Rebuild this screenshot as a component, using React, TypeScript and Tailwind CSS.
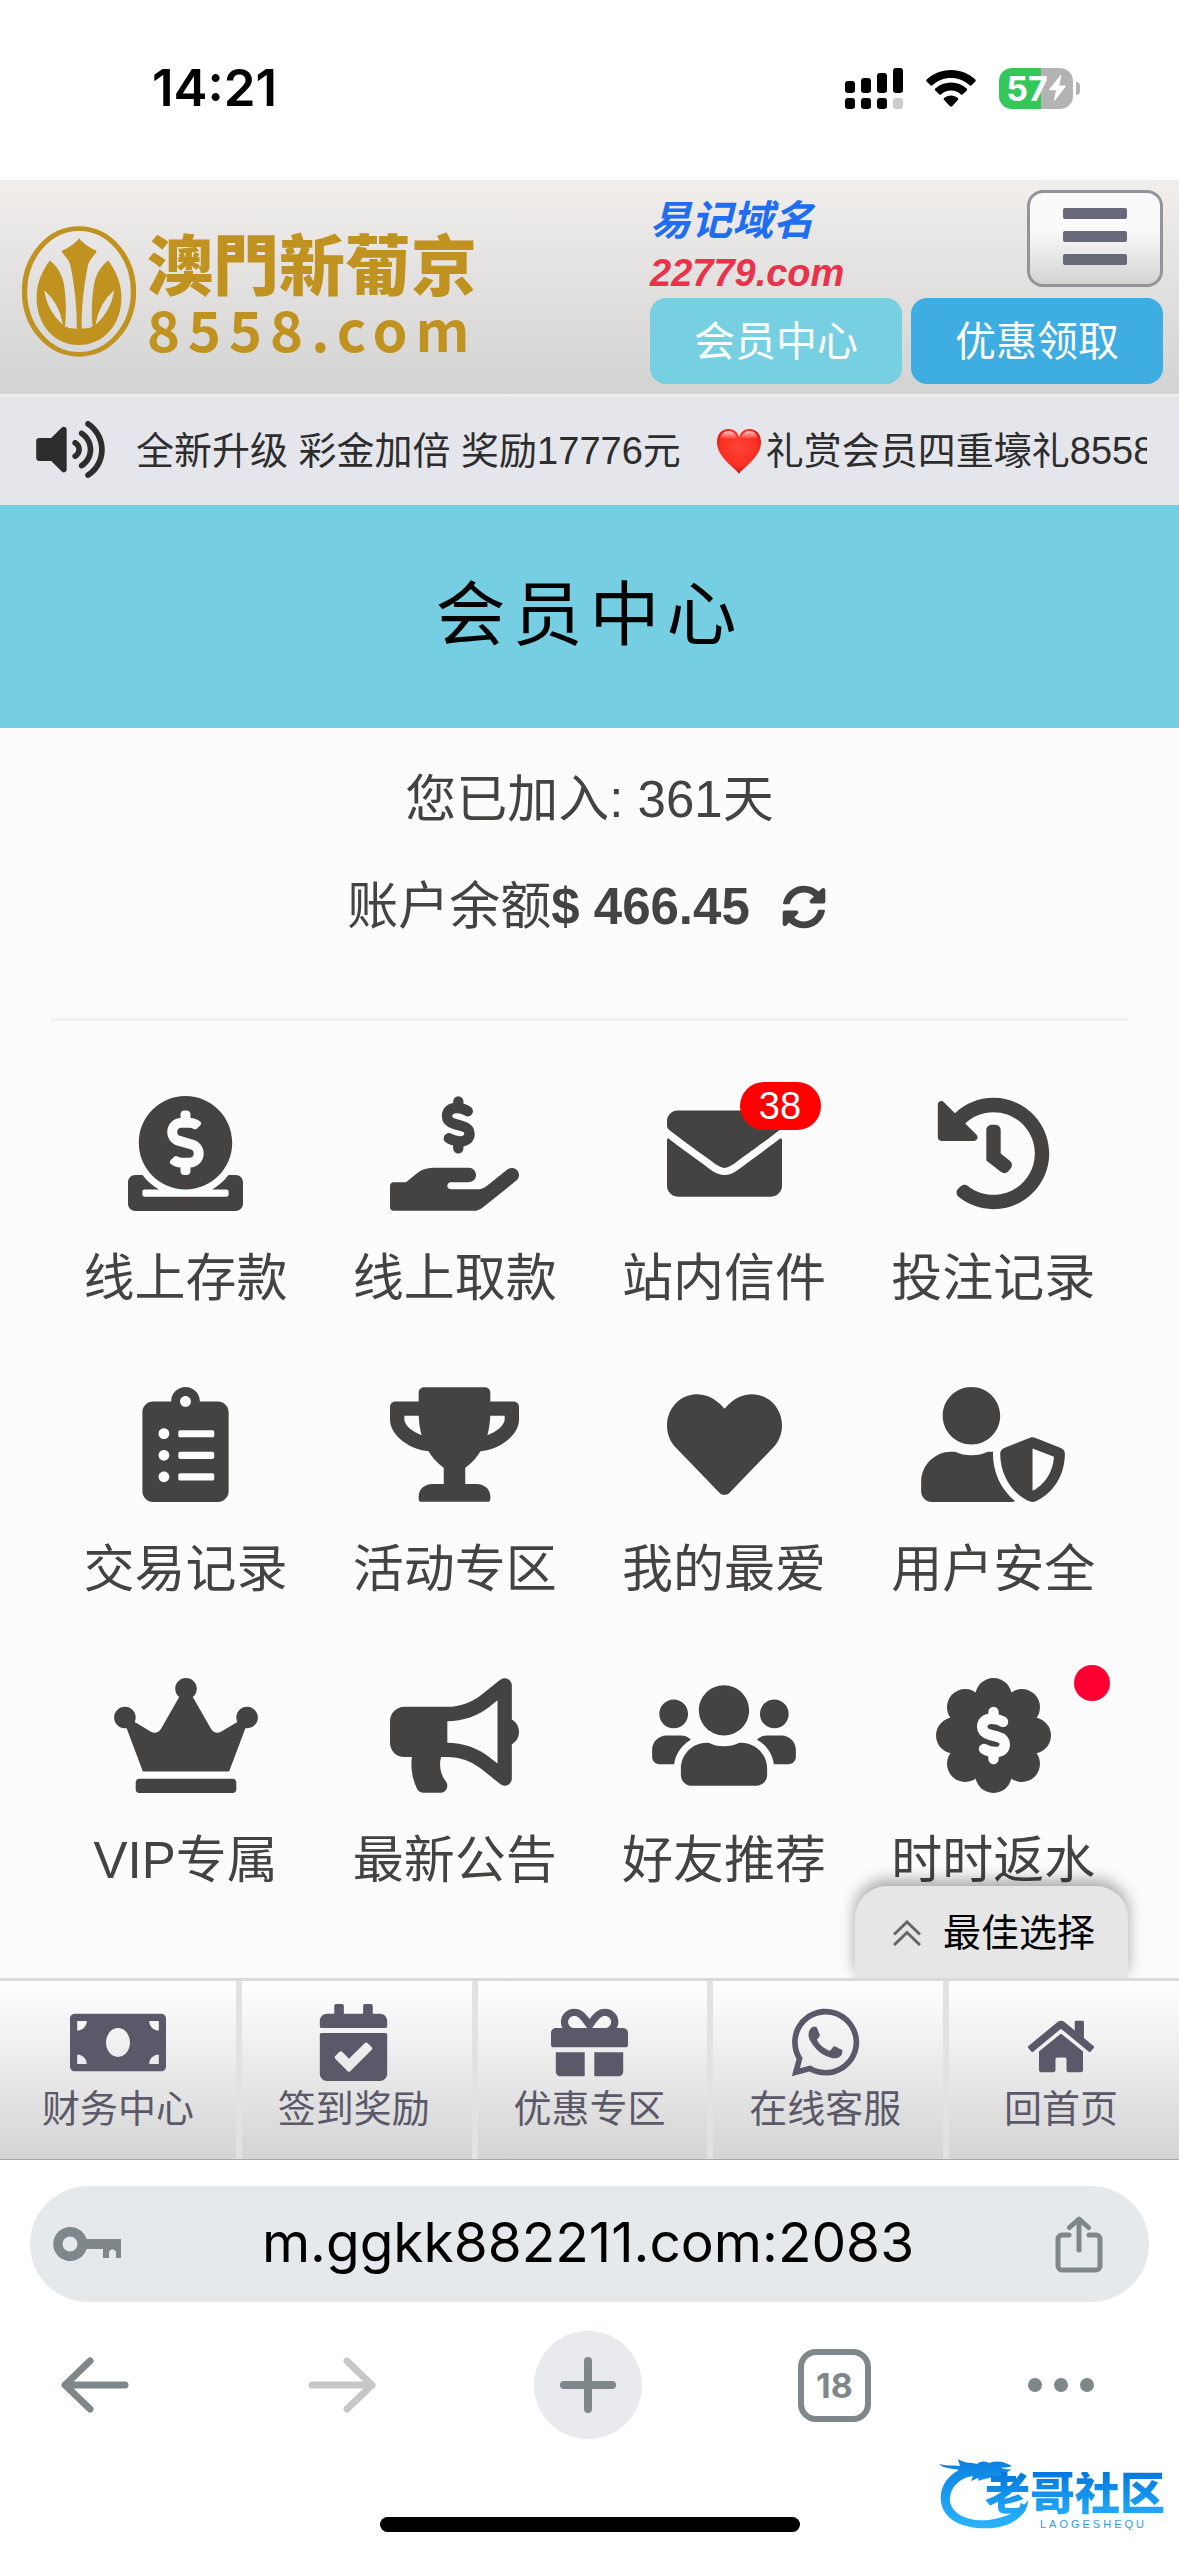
import type { ReactNode } from 'react';
import type { IconType } from 'react-icons';
import {
  FaBullhorn,
  FaCalendarCheck,
  FaClipboardList,
  FaCrown,
  FaDonate,
  FaEnvelope,
  FaGift,
  FaHeart,
  FaHistory,
  FaHome,
  FaMoneyBill,
  FaSyncAlt,
  FaTrophy,
  FaUserShield,
  FaUsers,
  FaVolumeUp,
  FaWhatsapp,
} from 'react-icons/fa';

const DOLLAR_PATH =
  'M42 -61C28 -70 8 -75 -8 -75C-34 -75 -50 -62 -50 -40C-50 -17 -36 -9 -14 -3L16 5C40 12 50 20 50 40C50 62 34 74 8 74C-14 74 -28 68 -42 60';

function Dollar({ transform, color }: { transform: string; color: string }) {
  return (
    <g transform={transform} fill="none" stroke={color} strokeLinecap="round">
      <path d={DOLLAR_PATH} strokeWidth="47" />
      <path d="M0 -105V-80M0 80V105" strokeWidth="46" />
    </g>
  );
}

function HandDollarIcon({ className }: { className?: string }) {
  return (
    <svg viewBox="0 0 576 512" className={className} fill="currentColor" aria-hidden="true">
      <Dollar transform="translate(305 128)" color="currentColor" />
      <path d="M565.3 328.1c-11.8-10.7-30.2-10-42.6 0L430.3 402c-11.3 9.1-25.4 14-40 14H272c-8.8 0-16-7.2-16-16s7.2-16 16-16h78.3c15.9 0 30.7-10.9 33.3-26.6 3.3-20-12.1-37.4-31.6-37.4H192c-27 0-53.1 9.3-74.1 26.3L71.4 384H16c-8.8 0-16 7.2-16 16v96c0 8.8 7.2 16 16 16h356.8c14.5 0 28.6-4.9 40-14L564 377c15.2-12.1 16.4-35.3 1.3-48.9z" />
    </svg>
  );
}

function BadgeDollarIcon({ className }: { className?: string }) {
  return (
    <svg viewBox="0 0 512 512" className={className} fill="currentColor" aria-hidden="true">
      <circle cx="256" cy="256" r="190" />
      <circle cx="256" cy="81" r="81" />
      <circle cx="256" cy="431" r="81" />
      <circle cx="81" cy="256" r="81" />
      <circle cx="431" cy="256" r="81" />
      <circle cx="130" cy="130" r="81" />
      <circle cx="382" cy="130" r="81" />
      <circle cx="130" cy="382" r="81" />
      <circle cx="382" cy="382" r="81" />
      <Dollar transform="translate(256 256)" color="#fcfcfc" />
    </svg>
  );
}

interface MenuItem {
  label: string;
  icon: IconType | typeof HandDollarIcon;
  width: string;
  badge?: string;
  dot?: boolean;
}

const MENU: MenuItem[] = [
  { label: '线上存款', icon: FaDonate, width: 'w-[115px]' },
  { label: '线上取款', icon: HandDollarIcon, width: 'w-[129px]' },
  { label: '站内信件', icon: FaEnvelope, width: 'w-[115px]', badge: '38' },
  { label: '投注记录', icon: FaHistory, width: 'w-[115px]' },
  { label: '交易记录', icon: FaClipboardList, width: 'w-[115px]' },
  { label: '活动专区', icon: FaTrophy, width: 'w-[129px]' },
  { label: '我的最爱', icon: FaHeart, width: 'w-[115px]' },
  { label: '用户安全', icon: FaUserShield, width: 'w-[144px]' },
  { label: 'VIP专属', icon: FaCrown, width: 'w-[144px]' },
  { label: '最新公告', icon: FaBullhorn, width: 'w-[129px]' },
  { label: '好友推荐', icon: FaUsers, width: 'w-[144px]' },
  { label: '时时返水', icon: BadgeDollarIcon, width: 'w-[115px]', dot: true },
];

const TABS: { label: string; icon: IconType; size: string }[] = [
  { label: '财务中心', icon: FaMoneyBill, size: 'h-[77px] w-[96px]' },
  { label: '签到奖励', icon: FaCalendarCheck, size: 'size-[77px]' },
  { label: '优惠专区', icon: FaGift, size: 'size-[77px]' },
  { label: '在线客服', icon: FaWhatsapp, size: 'size-[77px]' },
  { label: '回首页', icon: FaHome, size: 'mt-2 h-[59px] w-[66px]' },
];

function StatusBar() {
  return (
    <div className="flex h-[180px] items-center justify-between bg-white pr-[99px] pb-1 pl-[152px] text-black">
      <span className="font-['Inter',sans-serif] text-[51px] leading-[60px] font-semibold">14:21</span>
      <div className="flex items-center gap-[23px]">
        <svg viewBox="0 0 58 41" className="h-[41px] w-[58px]" aria-hidden="true">
          <rect x="0" y="13" width="10" height="12" rx="3" />
          <rect x="16" y="10" width="10" height="15" rx="3" />
          <rect x="32" y="5" width="10" height="20" rx="3" />
          <rect x="48" y="0" width="10" height="25" rx="3" />
          <rect x="0" y="30" width="10" height="11" rx="3" />
          <rect x="16" y="30" width="10" height="11" rx="3" />
          <rect x="32" y="30" width="10" height="11" rx="3" />
          <rect x="48" y="30" width="10" height="11" rx="3" fill="#ccc" />
        </svg>
        <svg viewBox="0 0 50 37" className="h-[37px] w-[50px]" aria-hidden="true">
          <path d="M25 0C15.5 0 7 3.6 .7 9.5c-.6.6-.6 1.5 0 2.1l3.7 3.7c.5.5 1.4.5 2 0C11.2 10.7 17.8 8 25 8s13.8 2.7 18.6 7.3c.6.5 1.5.5 2 0l3.7-3.7c.6-.6.6-1.5 0-2.1C43 3.600 34.5 0 25 0z" />
          <path d="M25 12.5c-6 0-11.5 2.3-15.7 6-.6.6-.6 1.5 0 2.1l3.8 3.7c.5.5 1.3.5 1.9.1 2.7-2.4 6.2-3.800 10-3.800s7.3 1.4 10 3.800c.6.4 1.4.4 1.9-.1l3.8-3.7c.6-.6.6-1.5 0-2.1-4.2-3.7-9.7-6-15.7-6z" />
          <path d="M25 25.5c-2.6 0-5 .9-6.8 2.4-.7.6-.7 1.5-.1 2.1l5.9 6.3c.6.6 1.4.6 2 0l5.9-6.3c.6-.6.6-1.5-.1-2.1-1.8-1.500-4.2-2.400-6.800-2.400z" />
        </svg>
        <div className="flex items-center gap-[3px]">
          <div className="flex h-[41px] w-[74px] items-center justify-center gap-px rounded-[13px] bg-[linear-gradient(90deg,#34c759_57%,#b3b3b3_57%)] text-white">
            <span className="font-['Inter',sans-serif] text-[34px] leading-[41px] font-bold">57</span>
            <svg viewBox="0 0 17 26" className="h-[26px] w-[17px]" fill="currentColor" aria-hidden="true">
              <path d="M11.5 0L.6 13.800c-.5.7-.1 1.4.6 1.4h5.8L5 25.2c-.2.9.5 1 1 .4L16.5 11.800c.5-.7.1-1.4-.6-1.4h-5.6L12.3.7c.2-.8-.4-1.2-.8-.7z" />
            </svg>
          </div>
          <span className="h-[13px] w-1 rounded-r-full bg-[#b3b3b3]" />
        </div>
      </div>
    </div>
  );
}

function Emblem() {
  return (
    <svg
      viewBox="0 0 297 394"
      preserveAspectRatio="none"
      className="h-[131px] w-[114px] shrink-0"
      fill="#c09220"
      aria-hidden="true"
    >
      <ellipse cx="148.5" cy="197" rx="142" ry="189" fill="none" stroke="#c09220" strokeWidth="14" />
      <path d="M149 37c12 18 30 30 46 38-8 18-20 24-24 48-12 70-16 130-16 189h-12c0-59-4-119-16-189-4-24-16-30-24-48 16-8 34-20 46-38z" />
      <path d="M72 104C50 140 38 175 38 215c0 85 48 143 110 143s111-58 111-143c0-40-12-75-34-111-18 14-32 40-37 70-6 40-8 90-4 126 0 4-4 6-8 7-18 3-40 3-56 0-4-1-8-3-8-7 4-36 3-86-3-126-5-30-19-56-37-70z" />
      <path
        d="M60 198c6 40 20 68 44 94-6-38-20-70-44-94zM238 198c-6 40-20 68-44 94 6-38 20-70 44-94z"
        fill="#e2e0df"
        stroke="#e2e0df"
        strokeWidth="3"
      />
      <path d="M115 301c8 10 20 12 28 12V290h12v23c8 0 20-2 28-12v30h-68z" />
    </svg>
  );
}

function SiteHeader() {
  return (
    <header className="flex justify-between border-b-[3px] border-[#f0eeec] bg-linear-to-b from-[#f1eeec] to-[#d3d3d3] pt-[10px] pr-4 pb-[10px] pl-[22px]">
      <a href="#" className="flex items-center gap-[11px] pt-2 text-[#c09220]">
        <Emblem />
        <span className="flex flex-col">
          <span className="font-['Noto_Sans_CJK_TC',sans-serif] text-[66px] leading-[74px] font-black">澳門新葡京</span>
          <span className="font-['Noto_Sans_CJK_SC',sans-serif] text-[56px] leading-[60px] font-bold tracking-[8px]">
            8558.com
          </span>
        </span>
      </a>
      <div className="flex flex-col gap-1">
        <div className="flex items-start justify-between">
          <div className="flex flex-col font-bold italic">
            <span className="text-[41px] leading-[62px] text-[#1f6df0]">易记域名</span>
            <span className="text-[38px] leading-[42px] text-[#e8334a]">22779.com</span>
          </div>
          <button
            type="button"
            aria-label="菜单"
            className="flex h-[97px] w-[136px] flex-col items-center justify-center gap-3 rounded-[16px] border-[3px] border-[#939499] bg-linear-to-b from-[#fafafa] from-40% to-[#d3d4d2] pb-1"
          >
            <span className="h-[11px] w-16 rounded-[2px] bg-[#676878]" />
            <span className="h-[11px] w-16 rounded-[2px] bg-[#676878]" />
            <span className="h-[11px] w-16 rounded-[2px] bg-[#676878]" />
          </button>
        </div>
        <div className="flex gap-[9px] text-[41px] leading-[84px] text-white">
          <button type="button" className="w-[252px] rounded-[16px] bg-[#77cfe2] pt-[2px]">
            会员中心
          </button>
          <button type="button" className="w-[252px] rounded-[16px] bg-[#3dade2] pt-[2px]">
            优惠领取
          </button>
        </div>
      </div>
    </header>
  );
}

function RedHeart() {
  return (
    <svg viewBox="0 0 46 46" className="h-[46px] w-[46px] shrink-0" aria-hidden="true">
      <defs>
        <radialGradient id="heart" cx="0.5" cy="0.4" r="0.6">
          <stop offset="0" stopColor="#ff4335" />
          <stop offset="0.7" stopColor="#f92f22" />
          <stop offset="1" stopColor="#c4140c" />
        </radialGradient>
        <linearGradient id="shine" x1="0" y1="0" x2="0" y2="1">
          <stop offset="0" stopColor="#fff" stopOpacity="0.75" />
          <stop offset="1" stopColor="#fff" stopOpacity="0" />
        </linearGradient>
      </defs>
      <path
        d="M23 46C20 40 1 30 1 14 1 6 6 1 12.5 1 18 1 21.5 4 23 9 24.5 4 28 1 33.5 1 40 1 45 6 45 14 45 30 26 40 23 46z"
        fill="url(#heart)"
      />
      <path d="M4 11c1-5 4-8 8.500-8S20 6 21 11zM25 11c1-5 4-8 8.500-8S41 6 42 11z" fill="url(#shine)" />
    </svg>
  );
}

function Notice() {
  return (
    <div className="flex h-[108px] items-center bg-[#e5e6eb] pr-8 pl-[34px] text-[#2d2d2d]">
      <FaVolumeUp className="h-[65px] w-[73px] shrink-0 pb-1" />
      <div className="ml-[29px] flex flex-1 items-center overflow-hidden text-[38px] leading-[60px] whitespace-nowrap">
        <span>全新升级 彩金加倍 奖励17776元</span>
        <span className="ml-[35px] flex items-center gap-1">
          <RedHeart />
          礼赏会员四重壕礼8558
        </span>
      </div>
    </div>
  );
}

function MenuCell({ item }: { item: MenuItem }) {
  const Icon = item.icon;
  return (
    <a href="#" className="relative flex flex-col items-center gap-8">
      <Icon className={`h-[115px] ${item.width}`} />
      <span className="text-[51px] leading-[72px] whitespace-nowrap">{item.label}</span>
      {item.badge && (
        <span className="absolute -top-[14px] left-[150px] w-[81px] rounded-full bg-[#fe0000] text-center text-[38px] leading-[48px] text-white">
          {item.badge}
        </span>
      )}
      {item.dot && <span className="absolute -top-[13px] right-[18px] size-9 rounded-full bg-[#ff0032]" />}
    </a>
  );
}

function BottomNav() {
  return (
    <nav className="relative grid grid-cols-5 border-t-[3px] border-b border-t-[#dadada] border-b-[#a8a8a8] bg-linear-to-b from-white to-[#d4d4d4] text-[#5b5969]">
      {TABS.map(({ label, icon: Icon, size }) => (
        <a
          key={label}
          href="#"
          className="flex flex-col items-center pt-[23px] pb-[22px] shadow-[inset_6px_0_0_#e2e2e2] first:shadow-none"
        >
          <span className="flex h-[77px] items-center">
            <Icon className={size} />
          </span>
          <span className="text-[38px] leading-[56px] whitespace-nowrap">{label}</span>
        </a>
      ))}
      <button
        type="button"
        className="absolute right-[51px] bottom-full mb-[3px] flex items-center gap-[22px] rounded-t-[32px] bg-[#e6e6e6] pt-[2px] pr-[33px] pl-[38px] text-[38px] leading-[90px] text-black shadow-[0_-6px_16px_rgba(0,0,0,0.35)] [clip-path:inset(-40px_-40px_0_-40px)]"
      >
        <svg viewBox="0 0 28 26" className="h-[26px] w-7" fill="none" stroke="#666" strokeWidth="3" aria-hidden="true">
          <path d="M1 14.5L14 2l13 12.5M1 25L14 12.5 27 25" />
        </svg>
        最佳选择
      </button>
    </nav>
  );
}

function ToolButton({ label, children }: { label: string; children: ReactNode }) {
  return (
    <button type="button" aria-label={label} className="flex size-[108px] items-center justify-center last:justify-start">
      {children}
    </button>
  );
}

function BrowserBar() {
  return (
    <footer className="relative flex flex-col bg-white pt-[26px] text-[#80878a]">
      <div className="mx-[30px] flex h-[116px] items-center justify-between rounded-full bg-[#e6e9ec] pr-[46px] pl-[23px]">
        <svg viewBox="0 0 68 34" className="h-[34px] w-[68px]" fill="currentColor" aria-hidden="true">
          <path
            fillRule="evenodd"
            d="M17 0a17 17 0 0 1 16.500 12H68v19h-5v-5a3.500 3.500 0 0 0-7 0v5h-6V22H33.500A17 17 0 1 1 17 0zm0 9.500a7.500 7.500 0 1 0 0 15 7.500 7.500 0 0 0 0-15z"
          />
        </svg>
        <input
          aria-label="网址"
          defaultValue="m.ggkk882211.com:2083"
          className="min-w-0 flex-1 bg-transparent pb-1 text-center font-['Inter',sans-serif] text-[55px] leading-[70px] text-black outline-none"
        />
        <svg
          viewBox="0 0 48 57"
          className="h-[57px] w-12"
          fill="none"
          stroke="currentColor"
          strokeWidth="5"
          strokeLinecap="round"
          strokeLinejoin="round"
          aria-hidden="true"
        >
          <path d="M14 19H7a4 4 0 0 0-4 4v27a4 4 0 0 0 4 4h34a4 4 0 0 0 4-4V23a4 4 0 0 0-4-4h-7M24 34V4M14.5 11.5L24 3l9.500 8.500" />
        </svg>
      </div>
      <div className="mt-[29px] flex items-center justify-between pr-11 pl-[41px]">
        <ToolButton label="后退">
          <svg viewBox="0 0 68 56" className="h-14 w-[68px]" fill="none" stroke="currentColor" strokeWidth="7" strokeLinecap="round" strokeLinejoin="round">
            <path d="M64 28H5M29 4L4 28l25 24" />
          </svg>
        </ToolButton>
        <ToolButton label="前进">
          <svg viewBox="0 0 68 56" className="h-14 w-[68px]" fill="none" stroke="#c7c7c7" strokeWidth="7" strokeLinecap="round" strokeLinejoin="round">
            <path d="M4 28h59M39 4l25 24-25 24" />
          </svg>
        </ToolButton>
        <ToolButton label="新标签页">
          <span className="flex size-[108px] items-center justify-center rounded-full bg-[#e9eaee]">
            <svg viewBox="0 0 56 56" className="size-14" fill="none" stroke="currentColor" strokeWidth="8" strokeLinecap="round">
              <path d="M28 4v48M4 28h48" />
            </svg>
          </span>
        </ToolButton>
        <ToolButton label="标签页">
          <span className="flex size-[73px] items-center justify-center rounded-[18px] border-[6px] border-current font-['Inter',sans-serif] text-[34px] font-bold">
            18
          </span>
        </ToolButton>
        <ToolButton label="更多">
          <svg viewBox="0 0 68 16" className="h-4 w-[68px]" fill="currentColor">
            <circle cx="8" cy="8" r="7" />
            <circle cx="34" cy="8" r="7" />
            <circle cx="60" cy="8" r="7" />
          </svg>
        </ToolButton>
      </div>
      <span className="mt-[78px] mb-6 h-[15px] w-[420px] self-center rounded-full bg-black" />
      <Watermark />
    </footer>
  );
}

function Watermark() {
  return (
    <div className="absolute right-[14px] bottom-6 flex h-[76px] w-[226px] flex-col items-end">
      <svg viewBox="0 0 226 76" className="absolute inset-0 h-full w-full" aria-hidden="true">
        <defs>
          <linearGradient id="dragon" x1="0" y1="0" x2="0" y2="1">
            <stop offset="0" stopColor="#0a7fe0" />
            <stop offset="1" stopColor="#2ab4fb" />
          </linearGradient>
        </defs>
        <path
          d="M0 8c7 2 13 1 21 2l-2-7c7 5 13 3 19 5 4-3 8-3 12-1 8-3 16-1 23 3-4 2-8 1-11 2 4 1 7 2 10 1-2 4-8 4-12 4 3 1 6 2 9 1-3 4-10 3-14 2-5 3-10 2-15 5l-1-3-7 3 2-5C20 22 10 32 11 46c3 13 19 20 39 18 16-2 32-9 39-20 0 14-15 26-35 28C28 74 5 66 2 46 0 32 8 20 20 14 12 12 5 13 0 8z"
          fill="url(#dragon)"
        />
      </svg>
      <span className="relative mt-[16px] bg-linear-to-b from-[#0577dd] to-[#25aefa] bg-clip-text text-[45px] leading-[46px] font-black text-transparent">
        老哥社区
      </span>
      <span className="relative mr-[18px] text-[11px] leading-3 tracking-[3px] text-[#2a9bea]">LAOGESHEQU</span>
    </div>
  );
}

export default function App() {
  return (
    <div className="flex min-h-screen w-full flex-col bg-white font-['Liberation_Sans','Noto_Sans_CJK_SC',sans-serif]">
      <StatusBar />
      <SiteHeader />
      <Notice />
      <h1 className="bg-[#76cee2] py-[74px] text-center text-[70px] leading-[75px] tracking-widest text-black">会员中心</h1>
      <main className="flex flex-1 flex-col bg-[#fcfcfc] px-[51px] pt-[18px] pb-[81px] text-[#444341]">
        <p className="text-center text-[51px] leading-[107px]">您已加入: 361天</p>
        <p className="flex items-center justify-center pr-[6px] text-[51px] leading-[107px]">
          账户余额<b>$ 466.45</b>
          <button type="button" aria-label="刷新余额" className="ml-8">
            <FaSyncAlt className="size-11" />
          </button>
        </p>
        <hr className="mt-[58px] border-t-[3px] border-[#f1f1f1]" />
        <div className="grid grid-cols-4 gap-y-[72px] pt-[75px]">
          {MENU.map((item) => (
            <MenuCell key={item.label} item={item} />
          ))}
        </div>
      </main>
      <BottomNav />
      <BrowserBar />
    </div>
  );
}
